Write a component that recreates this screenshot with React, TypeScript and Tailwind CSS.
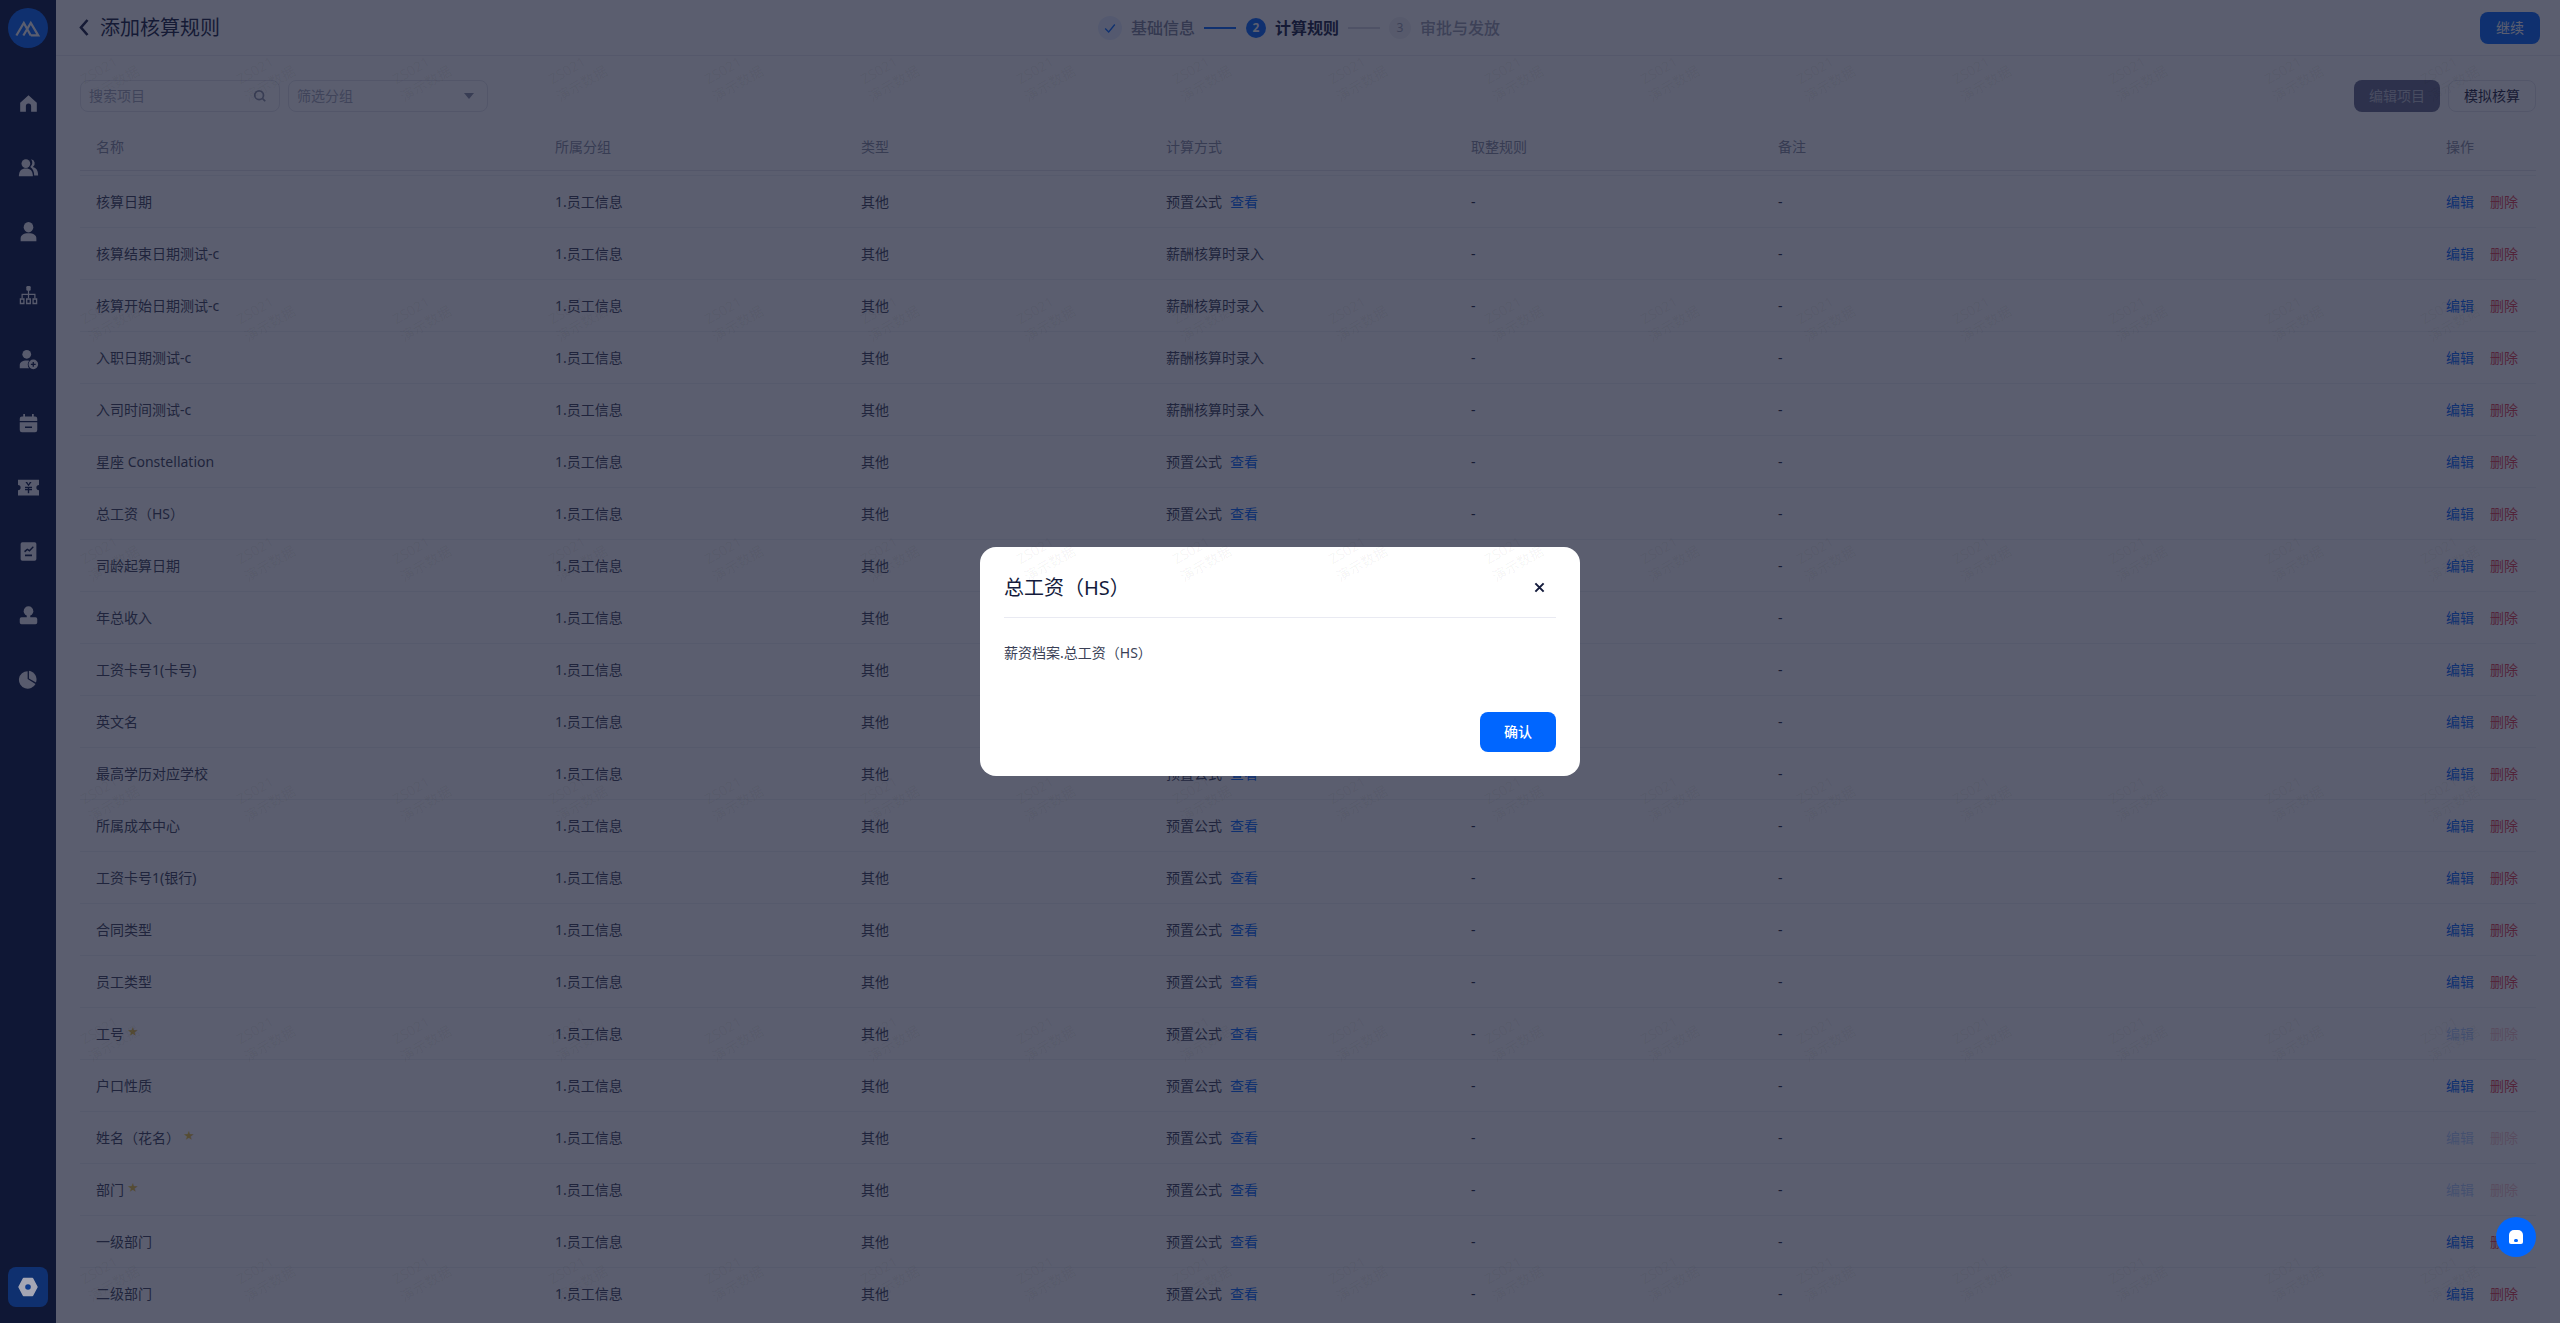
import React from "react";

type Row = { name: string; calc: "preset" | "salary"; star?: boolean; disabled?: boolean };

const rows: Row[] = [
  { name: "核算日期", calc: "preset" },
  { name: "核算结束日期测试-c", calc: "salary" },
  { name: "核算开始日期测试-c", calc: "salary" },
  { name: "入职日期测试-c", calc: "salary" },
  { name: "入司时间测试-c", calc: "salary" },
  { name: "星座 Constellation", calc: "preset" },
  { name: "总工资（HS）", calc: "preset" },
  { name: "司龄起算日期", calc: "preset" },
  { name: "年总收入", calc: "preset" },
  { name: "工资卡号1(卡号)", calc: "preset" },
  { name: "英文名", calc: "preset" },
  { name: "最高学历对应学校", calc: "preset" },
  { name: "所属成本中心", calc: "preset" },
  { name: "工资卡号1(银行)", calc: "preset" },
  { name: "合同类型", calc: "preset" },
  { name: "员工类型", calc: "preset" },
  { name: "工号", calc: "preset", star: true, disabled: true },
  { name: "户口性质", calc: "preset" },
  { name: "姓名（花名）", calc: "preset", star: true, disabled: true },
  { name: "部门", calc: "preset", star: true, disabled: true },
  { name: "一级部门", calc: "preset" },
  { name: "二级部门", calc: "preset" },
];

const cols = "grid grid-cols-[459px_306px_305px_305px_307px_668px_106px] items-center";

const navIcons: React.ReactNode[] = [
  <path key="h" d="M12 2.500 2.500 11v10.500H9V15a3 3 0 0 1 6 0v6.500h6.500V11z" />,
  <g key="u">
    <circle cx="9" cy="7.500" r="5" />
    <path d="M1 22c0-6.500 3-9 8-9s8 2.500 8 9z" />
    <path d="M15 2.500a5 5 0 0 1 2 9c3.800 1 6 3.600 6 9.500h-4.500c0-4-1.500-7.500-4.500-9.500a6.500 6.500 0 0 0 1-9z" />
  </g>,
  <g key="p">
    <ellipse cx="12" cy="7" rx="5.500" ry="6" />
    <path d="M3 23v-3c0-3.800 3-6 9-6s9 2.200 9 6v3z" />
  </g>,
  <g key="o">
    <rect x="9.500" y="1" width="5" height="5.500" rx="1.500" />
    <path d="M11.300 6h1.400v4H20v5h-1.400v-3.600h-5.900V15h-1.400v-3.600H5.400V15H4v-5h7.300z" />
    <path fillRule="evenodd" d="M2 15h5.500v7H2zm1.500 1.800v3.400H6v-3.400zM9.200 15h5.600v7H9.200zm1.500 1.800v3.400h2.600v-3.400zM16.500 15H22v7h-5.500zm1.500 1.800v3.400h2.500v-3.400z" />
  </g>,
  <g key="a">
    <circle cx="10" cy="6" r="5" />
    <path d="M2 22v-3.500c0-3.500 3-5.500 8-5.500 1 0 2 .1 2.800.3a6.500 6.500 0 0 0 0 8.700z" />
    <path fillRule="evenodd" d="M17.500 12a5.500 5.500 0 1 1 0 11 5.500 5.500 0 0 1 0-11zm-.8 2.800v2h-2v1.500h2v2h1.500v-2h2v-1.500h-2v-2z" />
  </g>,
  <path key="c" fillRule="evenodd" d="M6 1h2v3h8V1h2v3h1.500A2.500 2.500 0 0 1 22 6.500V9H2V6.500A2.500 2.500 0 0 1 4.500 4H6zM2 10.500h20v9a2.500 2.500 0 0 1-2.500 2.500h-15A2.500 2.500 0 0 1 2 19.500zM8 15.500V17h8v-1.500z" />,
  <path key="t" fillRule="evenodd" d="M0 3h24v6a3 3 0 0 0 0 6v6H0v-6a3 3 0 0 0 0-6zM8.500 5.800 12 10.500l3.500-4.700h-2L12 8.200l-1.500-2.400zM11.200 11H8v1.500h3.200v1H8V15h3.200v3.500h1.600V15H16v-1.500h-3.200v-1H16V11z" />,
  <path key="r" fillRule="evenodd" d="M5 1.500h14A2 2 0 0 1 21 3.500v17a2 2 0 0 1-2 2H5a2 2 0 0 1-2-2v-17a2 2 0 0 1 2-2zM7 11.500l3.500-3 2.500 1.500L17 6l1 1.200-4.800 5-2.500-1.500-2.700 2.300zM8 15.500V17.500h8v-2z" />,
  <g key="s">
    <circle cx="12" cy="7" r="5.500" />
    <path d="M10 11h4v3h6a2 2 0 0 1 2 2v4a2 2 0 0 1-2 2H4a2 2 0 0 1-2-2v-4a2 2 0 0 1 2-2h6z" />
  </g>,
  <g key="d">
    <path d="M11 2.500a10 10 0 1 0 9 14.500l-9-5.500z" />
    <path d="M12.500 2v8.800l8 4.700A10 10 0 0 0 12.500 2z" />
  </g>,
];

function Step({ state, n, label }: { state: "done" | "active" | "todo"; n: number; label: string }) {
  return (
    <div className="flex items-center">
      {state === "done" && (
        <span className="w-6 h-6 rounded-full bg-[#e6efff] flex items-center justify-center">
          <svg viewBox="0 0 16 16" className="w-3.5 h-3.5" fill="none" stroke="#0066ff" strokeWidth="1.500">
            <path d="M2.500 8.500 6.500 12.500 13.500 4" />
          </svg>
        </span>
      )}
      {state === "active" && (
        <span className="w-5 h-5 rounded-full bg-[#0066ff] text-white text-xs font-bold flex items-center justify-center">{n}</span>
      )}
      {state === "todo" && (
        <span className="w-[22px] h-[22px] rounded-full bg-[#f0f1f5] text-[#9a9eb0] text-xs flex items-center justify-center">{n}</span>
      )}
      <span
        className={
          "ml-[9px] text-base " +
          (state === "active" ? "font-bold text-[#141b3c]" : state === "done" ? "font-medium text-[#7d8296]" : "font-medium text-[#9a9eb0]")
        }
      >
        {label}
      </span>
    </div>
  );
}

export default function App() {
  return (
    <div className="relative h-screen w-full overflow-hidden bg-white flex font-['Noto_Sans','Noto_Sans_CJK_SC',sans-serif] text-sm text-[#1c2138]">
      <aside className="w-14 shrink-0 h-full bg-[#03113c] flex flex-col items-center">
        <div className="mt-2 w-10 h-10 rounded-full bg-[#0066ff] flex items-center justify-center">
          <svg viewBox="0 0 28 18" className="w-[26px] h-[17px]" fill="none" stroke="#fff" strokeWidth="2.400">
            <path d="M1.500 16.500 9.500 3l7.500 13.500M9 16.500 17 3l8 13.500H17" />
          </svg>
        </div>
        <div className="mt-[35px] flex flex-col gap-6">
          {navIcons.map((ic, i) => (
            <div key={i} className="w-10 h-10 flex items-center justify-center">
              <svg viewBox="0 0 24 24" className="w-[21px] h-[21px]" fill="#f4f5f8">
                {ic}
              </svg>
            </div>
          ))}
        </div>
        <div className="mt-auto mb-4 w-10 h-10 rounded-lg bg-[#0066ff]" />
      </aside>

      <main className="flex-1 min-w-0 h-full flex flex-col">
        <header className="h-14 shrink-0 border-b border-[#e9eaf0] flex items-center pl-[23px] pr-5">
          <div className="w-[1019px] shrink-0 flex items-center">
            <svg viewBox="0 0 10 18" className="w-[10px] h-[19px]" fill="none" stroke="#141b3c" strokeWidth="2.600">
              <path d="M8.500 1.500 2 9l6.500 7.500" />
            </svg>
            <span className="ml-[11px] text-xl text-[#141b3c]">添加核算规则</span>
          </div>
          <div className="flex items-center">
            <Step state="done" n={1} label="基础信息" />
            <span className="ml-[9px] mr-[10px] w-8 h-0.5 bg-[#0066ff]" />
            <Step state="active" n={2} label="计算规则" />
            <span className="ml-[9px] mr-[9px] w-8 h-0.5 bg-[#d5d7e0]" />
            <Step state="todo" n={3} label="审批与发放" />
          </div>
          <button className="ml-auto w-[60px] h-8 rounded-lg bg-[#0066ff] text-white text-sm">继续</button>
        </header>

        <div className="pl-6 pr-6 pt-6 flex items-center justify-between">
          <div className="flex gap-2">
            <div className="w-[200px] h-8 rounded-lg border border-[#e3e5ec] flex items-center justify-between pl-2 pr-3 text-[#a4a8b8]">
              <span>搜索项目</span>
              <svg viewBox="0 0 16 16" className="w-3.5 h-3.5" fill="none" stroke="#8a8fa3" strokeWidth="2">
                <circle cx="7" cy="7" r="5" />
                <path d="m11 11 3 3" />
              </svg>
            </div>
            <div className="w-[200px] h-8 rounded-lg border border-[#e3e5ec] flex items-center justify-between pl-2 pr-3 text-[#a4a8b8]">
              <span>筛选分组</span>
              <svg viewBox="0 0 12 8" className="w-3 h-2" fill="#8a8fa3">
                <path d="M1 1h10L6 7z" />
              </svg>
            </div>
          </div>
          <div className="flex gap-2">
            <button className="w-[86px] h-8 rounded-lg bg-[#64698a] text-white/60">编辑项目</button>
            <button className="w-[88px] h-8 rounded-lg border border-[#e3e5ec]">模拟核算</button>
          </div>
        </div>

        <div className="ml-6 mr-6 mt-[11px] flex-1 min-h-0">
          <div className={cols + " h-[48px] border-b border-[#e3e5ec] text-[#878c9f]"}>
            <div className="pl-4">名称</div>
            <div className="pl-4">所属分组</div>
            <div className="pl-4">类型</div>
            <div className="pl-4">计算方式</div>
            <div className="pl-4">取整规则</div>
            <div className="pl-4">备注</div>
            <div className="pl-4">操作</div>
          </div>
          <div className="mt-1">
            {rows.map((r) => (
              <div key={r.name} className={cols + " h-[52px] border-t border-[#eff0f4]"}>
                <div className="pl-4 flex items-start">
                  <span className="text-[#3a3f56]">{r.name}</span>
                  {r.star && <span className="ml-1 text-[10px] leading-[14px] text-[#e9c13a]">★</span>}
                </div>
                <div className="pl-4 text-[#3a3f56]">1.员工信息</div>
                <div className="pl-4 text-[#3a3f56]">其他</div>
                <div className="pl-4 text-[#3a3f56]">
                  {r.calc === "preset" ? (
                    <>
                      预置公式<span className="ml-2 text-[#0066ff]">查看</span>
                    </>
                  ) : (
                    "薪酬核算时录入"
                  )}
                </div>
                <div className="pl-4">-</div>
                <div className="pl-4">-</div>
                <div className={"pl-4 flex gap-4 " + (r.disabled ? "opacity-30" : "")}>
                  <span className="text-[#0066ff]">编辑</span>
                  <span className="text-[#e53e4d]">删除</span>
                </div>
              </div>
            ))}
          </div>
        </div>
      </main>

      {/* dimming layer and dialog */}
      <div className="absolute inset-0 bg-[rgba(22,26,50,0.7)] flex items-center justify-center">
        <div className="w-[600px] h-[229px] rounded-2xl bg-white flex flex-col px-6">
          <div className="h-[71px] pt-[11px] shrink-0 border-b border-[#e9eaf2] flex items-center justify-between">
            <span className="text-xl text-[#141b3c]">总工资（HS）</span>
            <svg viewBox="0 0 12 12" className="w-[11px] h-[11px] mr-[11px]" fill="none" stroke="#141b3c" strokeWidth="2.200">
              <path d="m1.500 1.500 9 9m0-9-9 9" />
            </svg>
          </div>
          <p className="pt-[25px] text-sm leading-5 text-[#3a3f56]">薪资档案.总工资（HS）</p>
          <div className="mt-auto mb-6 flex justify-end">
            <button className="w-[76px] h-10 rounded-lg bg-[#0066ff] text-white text-sm font-medium">确认</button>
          </div>
        </div>
      </div>

      {/* settings glyph sits bright above the dim layer */}
      <div className="absolute left-2 bottom-4 w-10 h-10 flex items-center justify-center">
        <svg viewBox="0 0 24 24" className="w-[24px] h-[24px]" fill="#a5a6b4" stroke="#a5a6b4" strokeWidth="1.500" strokeLinejoin="round">
          <path d="M7.500 3.500h9l4.500 8.500-4.500 8.500h-9L3 12z" />
          <circle cx="12" cy="12" r="2.800" fill="#0e3a8c" stroke="none" />
        </svg>
      </div>

      {/* floating help button */}
      <div className="absolute left-[2496px] top-[1217px] w-10 h-10 rounded-full bg-[#0066ff] flex items-center justify-center">
        <div className="w-[14px] h-[14px] rounded-t-[5px] rounded-b-[2px] bg-white flex items-end justify-center pb-[2px]">
          <span className="w-1 h-[3px] rounded-full bg-[#0066ff]" />
        </div>
      </div>

      {/* watermark */}
      <div className="absolute left-[-125px] top-[-45px] w-[2808px] flex flex-wrap pointer-events-none">
        {Array.from({ length: 18 * 6 }).map((_, i) => (
          <div key={i} className="w-[156px] h-[240px] flex items-center justify-center">
            <div className="-rotate-30 text-sm leading-[19px] text-black/[0.05]">
              <div className="pl-[2px]">ZS021</div>
              <div>演示数据</div>
            </div>
          </div>
        ))}
      </div>
    </div>
  );
}
